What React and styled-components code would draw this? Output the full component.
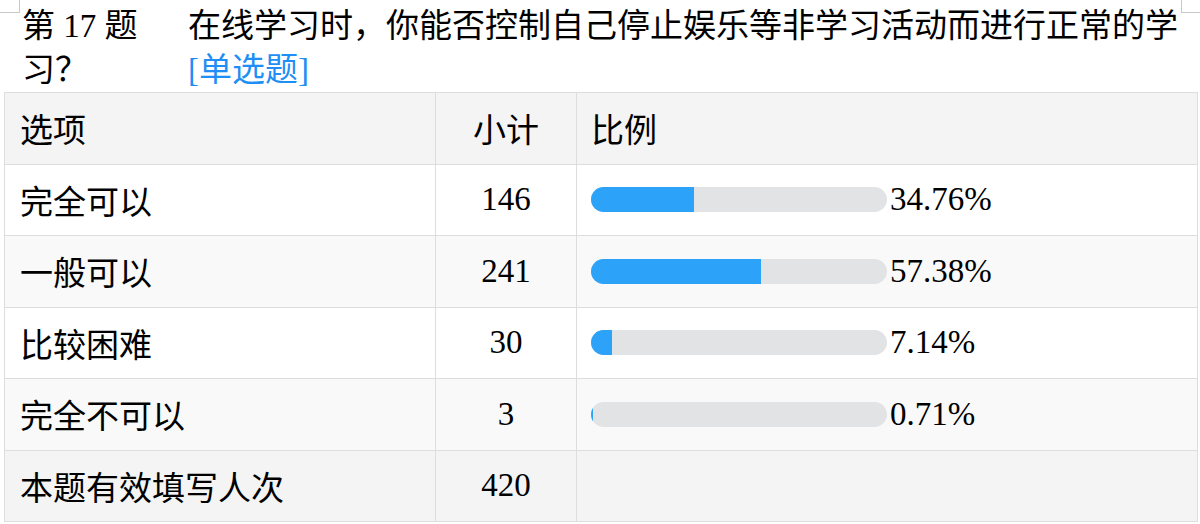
import React from 'react'
import styled, { createGlobalStyle } from 'styled-components'

const rows = [
    { label: '完全可以', count: 146, pct: 34.76 },
    { label: '一般可以', count: 241, pct: 57.38 },
    { label: '比较困难', count: 30, pct: 7.14 },
    { label: '完全不可以', count: 3, pct: 0.71 },
]

const App = () => {
    return (
        <Page>
            <GlobalStyle />
            <Corner side="left" />
            <Corner side="right" />
            <Title>
                <span>第 17 题</span>
                <span>在线学习时，你能否控制自己停止娱乐等非学习活动而进行正常的学</span>
                <span>习？</span>
                <Tag>[单选题]</Tag>
            </Title>
            <Table>
                <colgroup>
                    <col style={{ width: 431 }} />
                    <col style={{ width: 141 }} />
                    <col />
                </colgroup>
                <thead>
                    <Row tone="head">
                        <Cell>选项</Cell>
                        <Cell center>小计</Cell>
                        <Cell pad>比例</Cell>
                    </Row>
                </thead>
                <tbody>
                    {rows.map((r, i) => (
                        <Row key={r.label} tone={i % 2 ? 'alt' : 'plain'}>
                            <Cell>{r.label}</Cell>
                            <Cell center>{r.count}</Cell>
                            <Cell pad>
                                <BarWrap>
                                    <Track>
                                        <Fill style={{ width: r.pct + '%' }} />
                                    </Track>
                                    <Pct>{r.pct.toFixed(2)}%</Pct>
                                </BarWrap>
                            </Cell>
                        </Row>
                    ))}
                    <Row tone="head">
                        <Cell>本题有效填写人次</Cell>
                        <Cell center>420</Cell>
                        <Cell pad></Cell>
                    </Row>
                </tbody>
            </Table>
        </Page>
    )
}

export default App

const GlobalStyle = createGlobalStyle`
body{
    margin:0;
    background:#fff;
    font-family:"Liberation Serif", "Noto Sans CJK SC", serif;
    color:#000;
}
`;

const Page = styled.div`
position:relative;
width:1200px;
height:524px;
overflow:hidden;
padding:4px 3px 0 4px;
box-sizing:border-box;
`;

const Corner = styled.div`
position:absolute;
top:0;
${p => p.side === 'left' ? 'left:0; border-right:1px solid #c8c8c8;' : 'left:1181px; border-left:1px solid #c8c8c8;'}
width:19px;
height:12px;
border-bottom:1px solid #c8c8c8;
`;

const Title = styled.div`
display:grid;
grid-template-columns:166px 1fr;
padding-left:18px;
font-size:33px;
line-height:44px;
white-space:nowrap;
`;

const Tag = styled.span`
color:#1f8ff5;
`;

const Table = styled.table`
width:1194px;
border-collapse:collapse;
table-layout:fixed;
font-size:33px;
`;

const Row = styled.tr`
height:71.5px;
background:${p => p.tone === 'head' ? '#f4f4f4' : p.tone === 'alt' ? '#f9f9f9' : '#fff'};
`;

const Cell = styled.td`
border:1px solid #dddddd;
padding:0 ${p => p.pad ? '14px' : '15px'};
text-align:${p => p.center ? 'center' : 'left'};
vertical-align:middle;
white-space:nowrap;
`;

const BarWrap = styled.div`
display:flex;
align-items:center;
`;

const Track = styled.div`
width:296px;
height:25px;
flex:none;
border-radius:13px;
background:#e2e3e5;
overflow:hidden;
`;

const Fill = styled.div`
height:100%;
background:#2ca2f9;
`;

const Pct = styled.span`
margin-left:3px;
`;
